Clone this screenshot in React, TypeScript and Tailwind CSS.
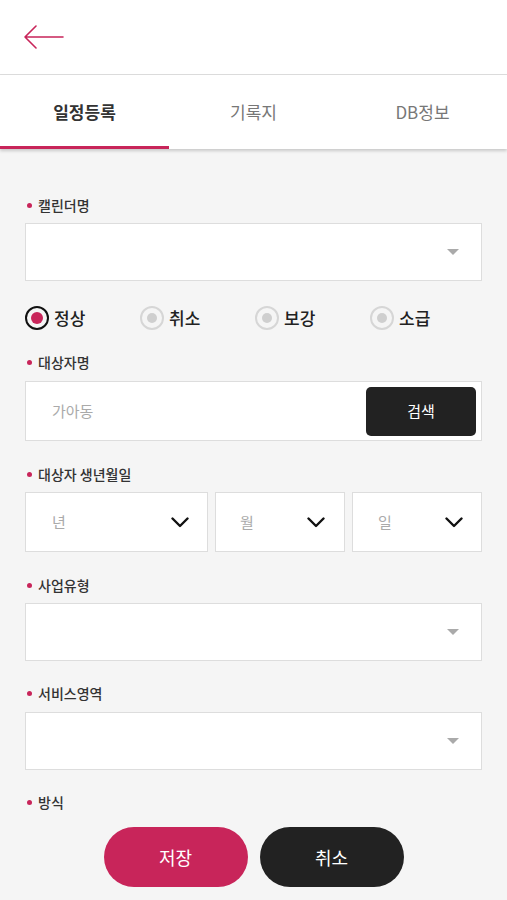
import React from "react";

const font = { fontFamily: '"Noto Sans CJK KR", "Noto Sans", sans-serif' };

function Label({ text }: { text: string }) {
  return (
    <div className="flex items-center h-5 pl-[27px]">
      <span className="w-[5px] h-[5px] rounded-full bg-[#c8255a]" />
      <span className="ml-[6px] text-[14px] leading-5 font-medium text-[#333]">{text}</span>
    </div>
  );
}

function Caret() {
  return (
    <svg width="14" height="8" viewBox="0 0 14 8">
      <path d="M1 1 L13 1 L7 7 Z" fill="#aaaaaa" />
    </svg>
  );
}

function Chevron() {
  return (
    <svg width="18" height="11" viewBox="0 0 18 11">
      <path d="M1.5 1.5 L9 9 L16.5 1.5" fill="none" stroke="#111" strokeWidth="2.4" strokeLinecap="round" strokeLinejoin="round" />
    </svg>
  );
}

function SelectBox({ mt }: { mt: string }) {
  return (
    <div className={`mx-[25px] ${mt} h-[58px] bg-white border border-[#dddddd] flex items-center justify-end pr-[21px]`}>
      <Caret />
    </div>
  );
}

function Radio({ label, checked }: { label: string; checked?: boolean }) {
  return (
    <div className="flex items-center w-[115px]">
      {checked ? (
        <span className="w-6 h-6 rounded-full border-2 border-[#111] flex items-center justify-center">
          <span className="w-3 h-3 rounded-full bg-[#c8255a]" />
        </span>
      ) : (
        <span className="w-6 h-6 rounded-full border-2 border-[#d6d6d6] flex items-center justify-center">
          <span className="w-[10px] h-[10px] rounded-full bg-[#cfcfcf]" />
        </span>
      )}
      <span className="ml-[5px] text-[17px] font-medium text-[#222] leading-6">{label}</span>
    </div>
  );
}

function DateBox({ text, width, textPad, chevPad }: { text: string; width: string; textPad: string; chevPad: string }) {
  return (
    <div className={`${width} h-[60px] bg-white border border-[#dddddd] flex items-center justify-between ${textPad} ${chevPad}`}>
      <span className="text-[15px] text-[#aaaaaa]">{text}</span>
      <Chevron />
    </div>
  );
}

export default function App() {
  return (
    <div className="w-[507px] h-[900px] bg-[#f5f5f5] overflow-hidden" style={font}>
      <div className="h-[75px] bg-white border-b border-[#dddddd] flex items-center pl-[24px]">
        <svg width="40" height="26" viewBox="0 0 40 26">
          <path d="M1 13 L39 13 M12 2 L1 13 L12 24" fill="none" stroke="#c8255a" strokeWidth="1.6" strokeLinecap="round" strokeLinejoin="round" />
        </svg>
      </div>
      <div className="h-[74px] bg-white flex shadow-[0_2px_3px_rgba(0,0,0,0.18)] relative z-10">
        <div className="w-[169px] flex items-center justify-center text-[17px] font-bold text-[#333] border-b-[3px] border-[#c8255a] pt-[3px]">일정등록</div>
        <div className="w-[169px] flex items-center justify-center text-[17px] text-[#777]">기록지</div>
        <div className="w-[169px] flex items-center justify-center text-[17px] text-[#777]">DB정보</div>
      </div>

      <div className="pt-[46px]">
        <Label text="캘린더명" />
        <SelectBox mt="mt-2" />

        <div className="flex pl-[25px] mt-[25px] h-6">
          <Radio label="정상" checked />
          <Radio label="취소" />
          <Radio label="보강" />
          <Radio label="소급" />
        </div>

        <div className="mt-[22px]">
          <Label text="대상자명" />
        </div>
        <div className="mx-[25px] mt-[9px] h-[60px] bg-white border border-[#dddddd] flex items-center justify-between pl-[26px] pr-[5px]">
          <span className="text-[15px] text-[#aaaaaa]">가아동</span>
          <div className="w-[110px] h-[49px] rounded-[5px] bg-[#222] flex items-center justify-center text-[15px] text-white">검색</div>
        </div>

        <div className="mt-[23px]">
          <Label text="대상자 생년월일" />
        </div>
        <div className="mx-[25px] mt-2 flex gap-[7px]">
          <DateBox text="년" width="w-[183px]" textPad="pl-[26px]" chevPad="pr-[18px]" />
          <DateBox text="월" width="w-[130px]" textPad="pl-[24px]" chevPad="pr-[19px]" />
          <DateBox text="일" width="w-[130px]" textPad="pl-[25px]" chevPad="pr-[18px]" />
        </div>

        <div className="mt-[23px]">
          <Label text="사업유형" />
        </div>
        <SelectBox mt="mt-2" />

        <div className="mt-[22px]">
          <Label text="서비스영역" />
        </div>
        <SelectBox mt="mt-[9px]" />

        <div className="mt-[22px]">
          <Label text="방식" />
        </div>

        <div className="flex justify-center gap-3 mt-[15px]">
          <div className="w-[144px] h-[60px] rounded-full bg-[#c8255a] flex items-center justify-center text-[18px] text-white">저장</div>
          <div className="w-[144px] h-[60px] rounded-full bg-[#222] flex items-center justify-center text-[18px] text-white">취소</div>
        </div>
      </div>
    </div>
  );
}
